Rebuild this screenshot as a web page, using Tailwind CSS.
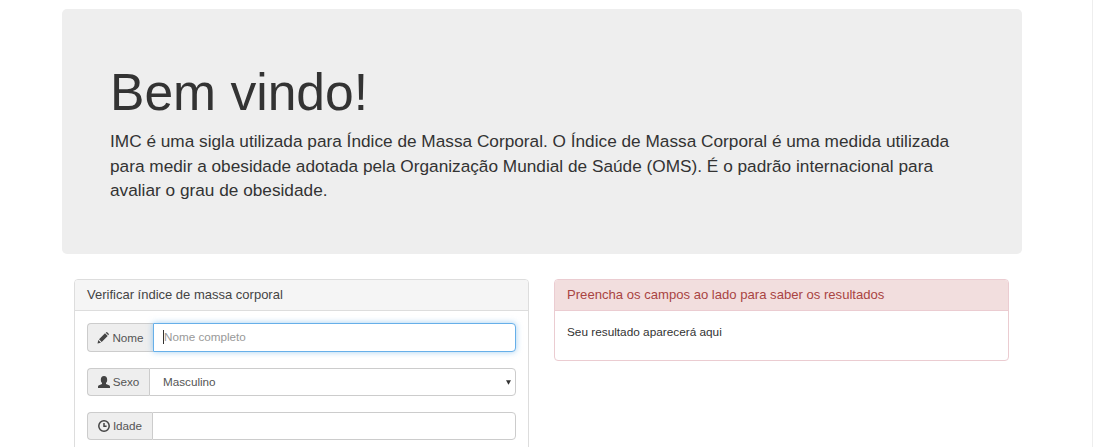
<!DOCTYPE html>
<html lang="pt-BR">
<head>
    <meta charset="UTF-8">
    <title>IMC</title>
    <script src="https://cdn.jsdelivr.net/npm/@tailwindcss/browser@4"></script>
</head>
<body class="bg-white overflow-hidden h-[447px] font-['Liberation_Sans',sans-serif] text-[#333]">
    <div class="w-[1093px] h-[447px] border-r border-[#eee] overflow-hidden pt-[9px] pl-[62px]">

        <!-- jumbotron -->
        <div class="w-[960px] h-[245px] bg-[#eee] rounded-[5px] pl-[48px] pr-[60px] pt-[53px]">
            <h1 class="text-[51.6px] leading-[60px] text-[#333]">Bem vindo!</h1>
            <p class="text-[17.24px] leading-[24.6px] mt-[7px] text-[#333]">IMC é uma sigla utilizada para Índice de Massa Corporal. O Índice de Massa Corporal é uma medida utilizada para medir a obesidade adotada pela Organização Mundial de Saúde (OMS). É o padrão internacional para avaliar o grau de obesidade.</p>
        </div>

        <div class="flex gap-[25px] pl-[12px] mt-[25px] items-start">
            <!-- formulario -->
            <div class="w-[455px] h-[200px] border border-[#ddd] rounded-[4px] shrink-0">
                <div class="h-[31px] bg-[#f5f5f5] border-b border-[#ddd] rounded-t-[3px] px-[12px] text-[13px] leading-[30px] text-[#444]">Verificar índice de massa corporal</div>
                <div class="px-[12px] pt-[12px] flex flex-col gap-[16px] text-[11.7px] text-[#555]">
                    <div class="flex h-[29px]">
                        <span class="w-[66px] flex items-center justify-center gap-[3px] bg-[#eee] border border-[#ccc] border-r-0 rounded-l-[4px]">
                            <svg class="w-[12px] h-[12px]" viewBox="0 0 12 12" fill="#444"><path d="M0.5 11.5l0.8-3.4 2.6 2.6zM2 7.3L8 1.3l2.7 2.7-6 6zM8.7 0.7l0.7-0.5q0.4-0.2 0.8 0.1l1.5 1.5q0.3 0.4 0.1 0.8l-0.5 0.7z"/></svg>
                            Nome
                        </span>
                        <div class="flex-1 flex items-center bg-white border border-[#66afe9] rounded-r-[4px] pl-[9px] pb-[1px] shadow-[0_0_6px_rgba(102,175,233,0.6)] text-[#999]">
                            <span class="w-px h-[14px] bg-[#333]"></span>Nome completo
                        </div>
                    </div>
                    <div class="flex h-[28px]">
                        <span class="w-[62px] flex items-center justify-center gap-[3px] bg-[#eee] border border-[#ccc] border-r-0 rounded-l-[4px]">
                            <svg class="w-[12px] h-[12px]" viewBox="0 0 12 12" fill="#444"><path d="M0 12v-1.6q0-0.8 1-1.2l3-1.2v-1q-1.2-0.8-1.2-3Q2.800 0 6 0t3.200 4q0 2.200-1.200 3v1l3 1.200q1 0.400 1 1.200V12z"/></svg>
                            Sexo
                        </span>
                        <div class="flex-1 relative flex items-center bg-white border border-[#ccc] rounded-r-[4px] pl-[13px]">
                            Masculino
                            <svg class="absolute right-[4px] top-[11px] w-[5px] h-[5px]" viewBox="0 0 7 6" fill="#333"><path d="M0 0h7L3.500 6z"/></svg>
                        </div>
                    </div>
                    <div class="flex h-[28px]">
                        <span class="w-[65px] flex items-center justify-center gap-[3px] bg-[#eee] border border-[#ccc] border-r-0 rounded-l-[4px]">
                            <svg class="w-[12px] h-[12px]" viewBox="0 0 12 12" fill="none" stroke="#444" stroke-width="1.500"><circle cx="6" cy="6" r="5.200"/><path d="M6 3v3.300h2.600"/></svg>
                            Idade
                        </span>
                        <div class="flex-1 bg-white border border-[#ccc] rounded-r-[4px]"></div>
                    </div>
                </div>
            </div>

            <!-- resultado -->
            <div class="w-[455px] h-[82px] border border-[#ebccd1] rounded-[4px] shrink-0">
                <div class="h-[31px] bg-[#f2dede] border-b border-[#ebccd1] rounded-t-[3px] px-[12px] text-[13.1px] leading-[30px] text-[#a94442]">Preencha os campos ao lado para saber os resultados</div>
                <p class="px-[12px] pt-[13px] text-[11.8px] leading-[16px] text-[#333]">Seu resultado aparecerá aqui</p>
            </div>
        </div>
    </div>
</body>
</html>
